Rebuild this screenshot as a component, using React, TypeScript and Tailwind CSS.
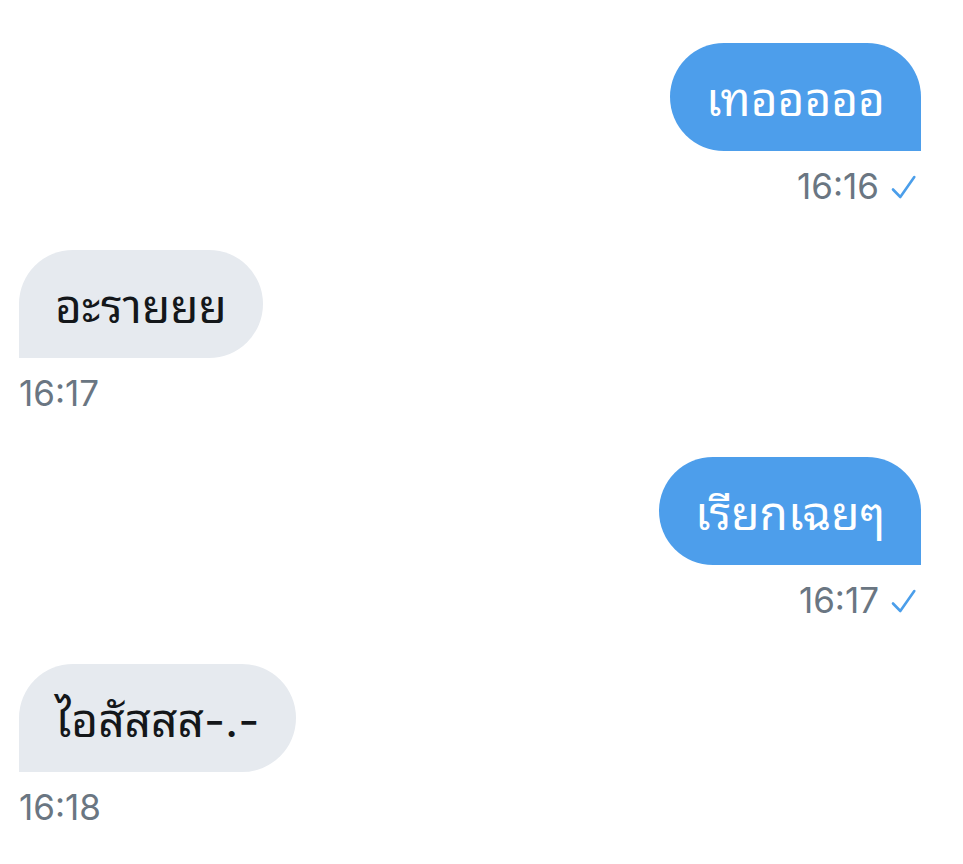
import React from "react";

type Message = {
  text: string;
  time: string;
  mine?: boolean;
};

const messages: Message[] = [
  { text: "เทอออออ", time: "16:16", mine: true },
  { text: "อะรายยย", time: "16:17" },
  { text: "เรียกเฉยๆ", time: "16:17", mine: true },
  { text: "ไอสัสสส-.-", time: "16:18" },
];

const Check = () => (
  <svg viewBox="0 0 26 26" className="w-[26px] h-[26px]" fill="none" stroke="#4b9eea" strokeWidth="2.6" aria-label="Sent">
    <path d="M2 16.5 L9.3 24 L23.3 4" strokeLinecap="round" strokeLinejoin="round" />
  </svg>
);

const Bubble = ({ text, time, mine }: Message) => (
  <li className={mine ? "flex flex-col items-end" : "flex flex-col items-start"}>
    <p
      className={
        mine
          ? "h-[108px] px-9 pt-1 flex items-center rounded-[54px] rounded-br-none bg-[#4d9eeb] text-white text-[46px]"
          : "h-[108px] px-9 pt-1 flex items-center rounded-[54px] rounded-bl-none bg-[#e6eaef] text-[#14171a] text-[46px]"
      }
    >
      {text}
    </p>
    <div className="mt-[15px] h-10 flex items-center gap-3 pr-1 text-[35px] text-[#6a7682]">
      <time>{time}</time>
      {mine && <Check />}
    </div>
  </li>
);

const App = () => {
  return (
    <main className="min-h-screen bg-white pt-[43px] pl-[19px] pr-[42px] font-['Inter','Noto_Sans_Thai_Looped','Loma','Garuda',sans-serif]">
      <ul className="flex flex-col gap-11">
        {messages.map((message) => (
          <Bubble key={message.text} {...message} />
        ))}
      </ul>
    </main>
  );
};

export default App;
